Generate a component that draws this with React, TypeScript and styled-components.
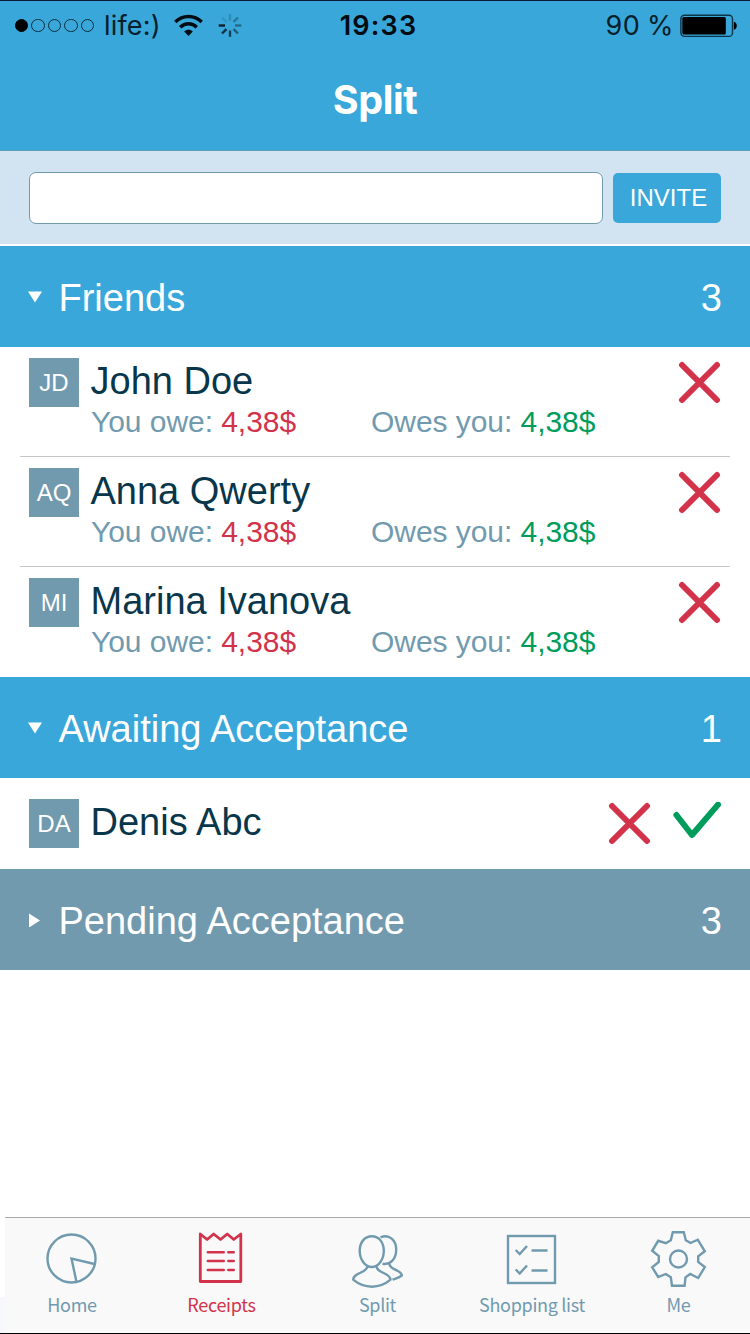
import React from "react";
import styled, { createGlobalStyle } from "styled-components";

const colors = {
  blue: "#39a7d9",
  slate: "#719aaf",
  pale: "#d2e4f2",
  navy: "#08364a",
  red: "#d2334b",
  green: "#009c5b",
};

const Global = createGlobalStyle`
  * { box-sizing: border-box; }
  body { margin: 0; background: #fff; font-family: "Liberation Sans", Arial, sans-serif; }
`;

const Screen = styled.div`
  width: 750px;
  height: 1334px;
  display: flex;
  flex-direction: column;
  background: #fff;
  overflow: hidden;
  border-bottom: 1px solid #000;
`;

const TopBar = styled.header`
  height: 151px;
  background: ${colors.blue};
  border-top: 1px solid #0b1a38;
  border-bottom: 1px solid #5d9dbd;
  font-family: Inter, sans-serif;
`;

const StatusBar = styled.div`
  height: 49px;
  display: grid;
  grid-template-columns: 1fr auto 1fr;
  align-items: center;
  padding: 0 12px 0 15px;
  color: #06202c;
`;

const StatusSide = styled.div<{ $end?: boolean }>`
  display: flex;
  align-items: center;
  justify-content: ${(p) => (p.$end ? "flex-end" : "flex-start")};
`;

const Signal = styled.div`
  display: flex;
  gap: 3px;
  margin-right: 10px;
`;

const Dot = styled.span<{ $on?: boolean }>`
  width: 13.4px;
  height: 13.4px;
  border-radius: 50%;
  border: 1.4px solid #0a2e3f;
  ${(p) => p.$on && "background: #000; border-color: #000;"}
`;

const Carrier = styled.span`
  font-size: 27px;
  letter-spacing: 0.2px;
  margin-right: 13px;
`;

const Clock = styled.span`
  font-size: 27px;
  font-weight: 600;
  letter-spacing: 1.2px;
  color: #000c12;
  margin-left: 4px;
`;

const Charge = styled.span`
  font-size: 27px;
  letter-spacing: 0.4px;
  word-spacing: -1px;
  margin-right: 6px;
`;

const Spinner = styled.svg`
  margin-left: 15px;
`;

const Title = styled.h1`
  margin: 0;
  height: 100px;
  line-height: 101px;
  text-align: center;
  color: #fff;
  font-size: 39.5px;
  font-weight: 650;
  letter-spacing: -0.4px;
`;

const InviteBar = styled.form`
  height: 95px;
  padding: 21px 29px 0;
  display: flex;
  gap: 10px;
  background: ${colors.pale};
  border-bottom: 2px solid #fff;
`;

const InviteInput = styled.input`
  width: 574px;
  height: 52px;
  border: 1px solid ${colors.slate};
  border-radius: 7px;
  background: #fff;
  padding: 0 12px;
  font-size: 24px;
`;

const InviteButton = styled.button`
  width: 108px;
  height: 50px;
  margin-top: 1px;
  padding: 0 0 0 3px;
  border: 0;
  border-radius: 5px;
  background: ${colors.blue};
  color: #fff;
  font: 24px/50px "Liberation Sans", Arial, sans-serif;
`;

const SectionHeader = styled.div<{ $closed?: boolean }>`
  height: 101px;
  display: flex;
  align-items: center;
  padding: 0 28px 0 28px;
  background: ${(p) => (p.$closed ? colors.slate : colors.blue)};
  color: #fff;
  font-size: 38px;
`;

const Caret = styled.svg`
  width: 14px;
  height: 14px;
  margin-right: 16.5px;
  fill: #fff;
`;

const SectionName = styled.span`
  flex: 1;
  padding-top: 3px;
`;

const Count = styled.span`
  padding-top: 3px;
`;

const FriendRow = styled.div<{ $short?: boolean; $last?: boolean }>`
  height: ${(p) => (p.$short ? 91 : 110)}px;
  margin: 0 20px;
  padding: ${(p) => (p.$short ? 21 : 11)}px 9px 0;
  display: flex;
  align-items: flex-start;
  border-bottom: ${(p) => (p.$last ? "0" : "1px solid #c5c8c9")};
`;

const Avatar = styled.div`
  width: 50px;
  height: 49px;
  background: ${colors.slate};
  color: #fff;
  font-size: 24px;
  line-height: 50px;
  text-align: center;
`;

const Details = styled.div`
  flex: 1;
  padding-left: 11.5px;
`;

const Name = styled.div`
  font-size: 38px;
  line-height: 44px;
  height: 46px;
  padding-top: 1px;
  color: ${colors.navy};
`;

const Balances = styled.div`
  display: grid;
  grid-template-columns: 280px auto;
  padding-left: 0.5px;
  font-size: 30px;
  line-height: 36px;
  letter-spacing: -0.05px;
  color: ${colors.slate};
`;

const Amount = styled.span<{ $credit?: boolean }>`
  color: ${(p) => (p.$credit ? colors.green : colors.red)};
`;

const Actions = styled.div`
  display: flex;
  gap: 22px;
  padding-top: 3px;
`;

const Spacer = styled.div`
  flex: 1;
`;

const Footer = styled.footer`
  padding-left: 5px;
  background: linear-gradient(#fff 80px, #f7f8fb 80px);
`;

const TabBar = styled.nav`
  height: 116px;
  display: grid;
  grid-template-columns: 134px 165px 147px 162px 131px;
  background: #f9f9f9;
  border-top: 1px solid #a9abac;
`;

const Tab = styled.div<{ $active?: boolean }>`
  display: flex;
  flex-direction: column;
  align-items: center;
  padding-top: 12px;
  color: ${(p) => (p.$active ? colors.red : colors.slate)};
  font: 18px/28px "Noto Sans CJK SC", sans-serif;
  letter-spacing: -0.3px;
  white-space: nowrap;

  svg {
    width: 60px;
    height: 60px;
    fill: none;
    stroke: currentColor;
    stroke-width: 2.4;
  }
`;

const Cross = () => (
  <svg width="43" height="43" viewBox="0 0 43 43" fill="none" stroke={colors.red} strokeWidth="6" strokeLinecap="round">
    <path d="M4 4 39 39M39 4 4 39" />
  </svg>
);

const Check = () => (
  <svg width="48" height="43" viewBox="0 0 48 43" fill="none" stroke={colors.green} strokeWidth="6" strokeLinecap="round" strokeLinejoin="round">
    <path d="M3.4 13 19 33 45 2.6" />
  </svg>
);

const Wifi = () => (
  <svg width="29" height="24" viewBox="0 0 29 24" fill="none" stroke="#000c12" strokeWidth="3.5">
    <path d="M1.3 8C8.500.500 20.500.500 27.700 8M6.200 13.200c4.800-4.700 11.800-4.700 16.600 0" />
    <path d="M14.500 22 10.200 17.600c2.400-2.400 6.200-2.400 8.600 0z" fill="#000c12" stroke="none" />
  </svg>
);

const spokes = [0.2, 0.35, 0.45, 0.55, 0.75, 0.85, 1, 0.12];

const Loading = () => (
  <Spinner width="24" height="24" viewBox="-12 -11.500 24 24" stroke="#08202c" strokeWidth="2.4">
    {spokes.map((o, i) => (
      <path key={i} d="M0-5V-11.300" opacity={o} transform={`rotate(${i * 45})`} />
    ))}
  </Spinner>
);

const Battery = () => (
  <svg width="58" height="24" viewBox="0 0 58 24">
    <rect x=".9" y="1.2" width="51.600" height="21.200" rx="3.500" fill="none" stroke="#0a3448" strokeWidth="1.400" />
    <rect x="2.300" y="3" width="43.500" height="17.600" rx="1.500" />
    <path d="M53.800 7.800c4 .8 4 7.200 0 8z" />
  </svg>
);

const HomeIcon = () => (
  <svg viewBox="0 0 60 60">
    <circle cx="29.500" cy="28.500" r="24" />
    <path d="M52.500 34 29.500 28.500 34.500 52" />
  </svg>
);

const ReceiptIcon = () => (
  <svg viewBox="0.700 0 60 60" strokeLinejoin="round">
    <path d="M9 51.500V4l6.800 5.500 6.600-5.500 6.800 5.500 6.700-5.500 6.600 5.500L49.500 4v47.500z" strokeWidth="2.800" />
    <path d="M16.500 22.200h16M37 22.200h5.500M16.500 31h16M37 31h5.500M16.500 40h16M37 40h5.500" strokeLinecap="round" />
  </svg>
);

const PeopleIcon = () => (
  <svg viewBox="0 0 60 60">
    <path d="M23.800 6.200c7.200 0 12 6.200 12 14.800s-5.500 16-12 16-12.100-7.400-12.100-16 4.900-14.800 12.100-14.800z" />
    <path d="M19.500 36C19.500 43 5.200 42.500 5.200 49.700c11 9.300 26.500 9.300 37.300 0C42.500 42.500 28.500 43.500 28.500 36" />
    <path d="M32.500 7.300C41.500 3.500 48.200 10.500 48.200 19.500c0 9-5.200 15.700-13.700 14.200M41.300 34c1.200 6.500 12.500 6 12.500 11.500-2.300 2-5.600 2.800-9.300 4.200" />
  </svg>
);

const ListIcon = () => (
  <svg viewBox="0 0 60 60">
    <rect x="6" y="6" width="47" height="47" />
    <path d="M13.700 20l4 4 7.300-8M13.700 39.500l4 4 7.300-8M29.500 20.500h16M29.500 40.500h16" />
  </svg>
);

const GearIcon = () => (
  <svg viewBox="0 0 60 60">
    <path d="M23.800 2.300H34.800L36.800 10.300 41.500 13 48.800 9.700 55.800 21.300 49.200 26.300V32L55.800 37 49.200 48 41.200 44 36.500 47.300 35.600 55.700H23L21.800 47.300 16.800 44 9.200 47 3.200 37.300 9.800 32V26L3.200 20.800 9.200 10.800 16.800 13.200 21.800 10.300z" />
    <circle cx="29.500" cy="29" r="8.500" />
  </svg>
);

const friends = [
  { initials: "JD", name: "John Doe", owe: "4,38$", owed: "4,38$" },
  { initials: "AQ", name: "Anna Qwerty", owe: "4,38$", owed: "4,38$" },
  { initials: "MI", name: "Marina Ivanova", owe: "4,38$", owed: "4,38$" },
];

const tabs = [
  { label: "Home", icon: <HomeIcon /> },
  { label: "Receipts", icon: <ReceiptIcon />, active: true },
  { label: "Split", icon: <PeopleIcon /> },
  { label: "Shopping list", icon: <ListIcon /> },
  { label: "Me", icon: <GearIcon /> },
];

const Section = ({ name, count, closed }: { name: string; count: number; closed?: boolean }) => (
  <SectionHeader $closed={closed}>
    <Caret viewBox="0 0 14 14">
      <path d={closed ? "M1 .5v14L12 7.500z" : "M0 1.500h14L7 12.500z"} />
    </Caret>
    <SectionName>{name}</SectionName>
    <Count>{count}</Count>
  </SectionHeader>
);

export default function App() {
  return (
    <Screen>
      <Global />
      <TopBar>
        <StatusBar>
          <StatusSide>
            <Signal>
              <Dot $on />
              <Dot />
              <Dot />
              <Dot />
              <Dot />
            </Signal>
            <Carrier>life:)</Carrier>
            <Wifi />
            <Loading />
          </StatusSide>
          <Clock>19:33</Clock>
          <StatusSide $end>
            <Charge>90 %</Charge>
            <Battery />
          </StatusSide>
        </StatusBar>
        <Title>Split</Title>
      </TopBar>
      <InviteBar>
        <InviteInput aria-label="Friend" />
        <InviteButton type="button">INVITE</InviteButton>
      </InviteBar>
      <Section name="Friends" count={3} />
      {friends.map((f, i) => (
        <FriendRow key={f.initials} $last={i === friends.length - 1}>
          <Avatar>{f.initials}</Avatar>
          <Details>
            <Name>{f.name}</Name>
            <Balances>
              <span>
                You owe: <Amount>{f.owe}</Amount>
              </span>
              <span>
                Owes you: <Amount $credit>{f.owed}</Amount>
              </span>
            </Balances>
          </Details>
          <Actions>
            <Cross />
          </Actions>
        </FriendRow>
      ))}
      <Section name="Awaiting Acceptance" count={1} />
      <FriendRow $short $last>
        <Avatar>DA</Avatar>
        <Details>
          <Name>Denis Abc</Name>
        </Details>
        <Actions>
          <Cross />
          <Check />
        </Actions>
      </FriendRow>
      <Section name="Pending Acceptance" count={3} closed />
      <Spacer />
      <Footer>
        <TabBar>
          {tabs.map((t) => (
            <Tab key={t.label} $active={t.active}>
              {t.icon}
              {t.label}
            </Tab>
          ))}
        </TabBar>
      </Footer>
    </Screen>
  );
}
